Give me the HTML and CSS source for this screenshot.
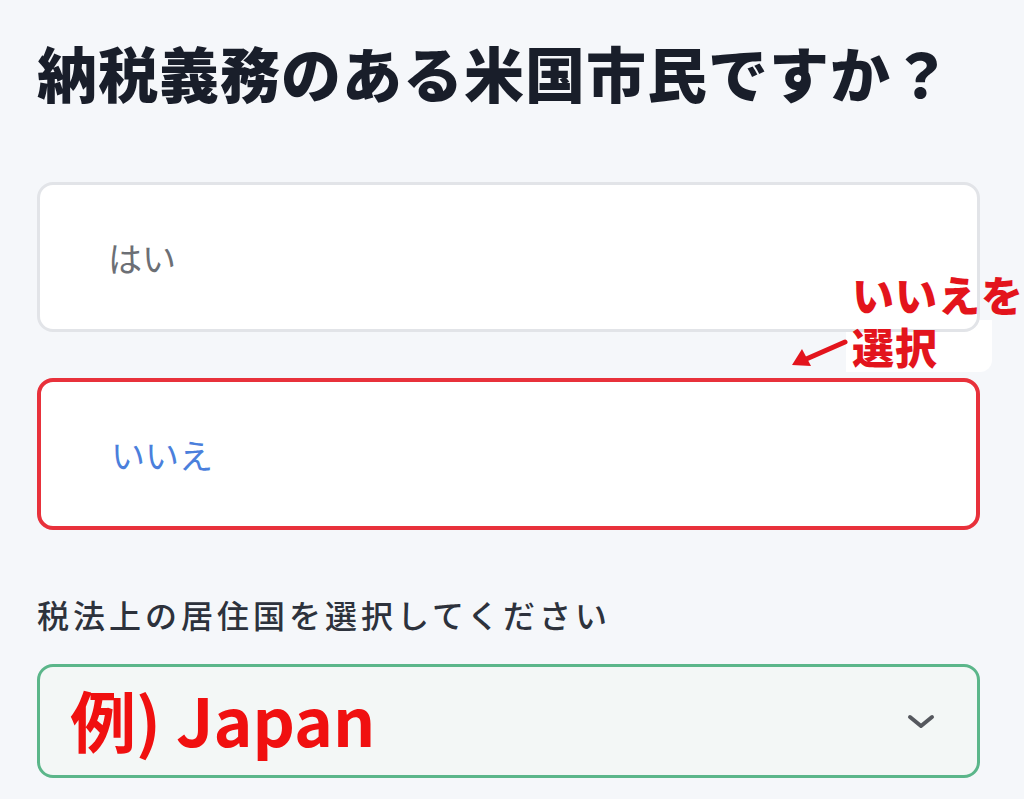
FILE: index.html
```html
<!DOCTYPE html>
<html lang="ja">
<head>
    <meta charset="UTF-8">
    <meta name="viewport" content="width=device-width, initial-scale=1.0">
    <title>納税義務のある米国市民ですか？</title>
    <link rel="stylesheet" href="styles.css">
</head>
<body>
    <div class="page">
        <h1 class="question">納税義務のある米国市民ですか？</h1>

        <div class="choices">
            <div class="choice">はい</div>
            <div class="choice choice-selected">いいえ</div>
        </div>

        <div class="field">
            <label class="field-label">税法上の居住国を選択してください</label>
            <div class="select">
                <span class="select-value">例) Japan</span>
                <svg class="chevron" width="28" height="16" viewBox="0 0 28 16">
                    <path d="M3 3 L14 12 L25 3" fill="none" stroke="#55585e" stroke-width="4" stroke-linecap="round" stroke-linejoin="round"/>
                </svg>
            </div>
        </div>

        <!-- annotation over the choices -->
        <div class="note">いいえを<br>選択</div>
        <svg class="note-arrow" width="60" height="34" viewBox="0 0 60 34">
            <line x1="55" y1="6" x2="14" y2="24" stroke="#e3141c" stroke-width="5" stroke-linecap="round"/>
            <polygon points="2,29 12,13 21,30" fill="#e3141c"/>
        </svg>
    </div>
</body>
</html>
```

FILE: styles.css
```css
* {
    margin: 0;
    padding: 0;
    box-sizing: border-box;
}

body {
    font-family: 'Noto Sans CJK JP', 'Noto Sans', sans-serif;
    background: #f5f7fa;
    width: 1024px;
    height: 799px;
    overflow: hidden;
}

.page {
    position: relative;
    padding: 34px 44px 0 37px;
}

.question {
    font-size: 60px;
    font-weight: 900;
    line-height: 76px;
    letter-spacing: 1px;
    color: #191e2a;
    white-space: nowrap;
}

.choices {
    display: flex;
    flex-direction: column;
    gap: 46px;
    margin-top: 72px;
}

.choice {
    height: 150px;
    background: #fff;
    border: 3px solid #e2e4e8;
    border-radius: 16px;
    display: flex;
    align-items: center;
    padding-left: 68px;
    font-size: 34px;
    color: #6c6f75;
}

.choice-selected {
    height: 152px;
    border: 4px solid #e8313b;
    color: #4b7fdc;
    padding-left: 70px;
}

.field {
    margin-top: 62px;
}

.field-label {
    display: block;
    font-size: 32px;
    font-weight: 500;
    letter-spacing: 4px;
    line-height: 44px;
    color: #2d323c;
}

.select {
    margin-top: 28px;
    height: 114px;
    background: #f3f7f6;
    border: 3px solid #5bb68a;
    border-radius: 16px;
    display: flex;
    align-items: center;
    justify-content: space-between;
    padding: 0 42px 0 30px;
}

.select-value {
    font-size: 66px;
    font-weight: 700;
    color: #f01010;
    line-height: 1;
    margin-top: -6px;
}

.chevron {
    margin-top: 2px;
}

.note {
    position: absolute;
    left: 846px;
    top: 268px;
    padding-left: 6px;
    font-size: 42px;
    font-weight: 900;
    line-height: 52px;
    letter-spacing: 1px;
    color: #e3141c;
    white-space: nowrap;
}

/* white patch behind the second line */
.note::before {
    content: '';
    position: absolute;
    left: 0;
    top: 52px;
    width: 146px;
    height: 52px;
    background: #fff;
    border-radius: 0 0 12px 0;
    z-index: -1;
}

.note-arrow {
    position: absolute;
    left: 790px;
    top: 336px;
}
```
